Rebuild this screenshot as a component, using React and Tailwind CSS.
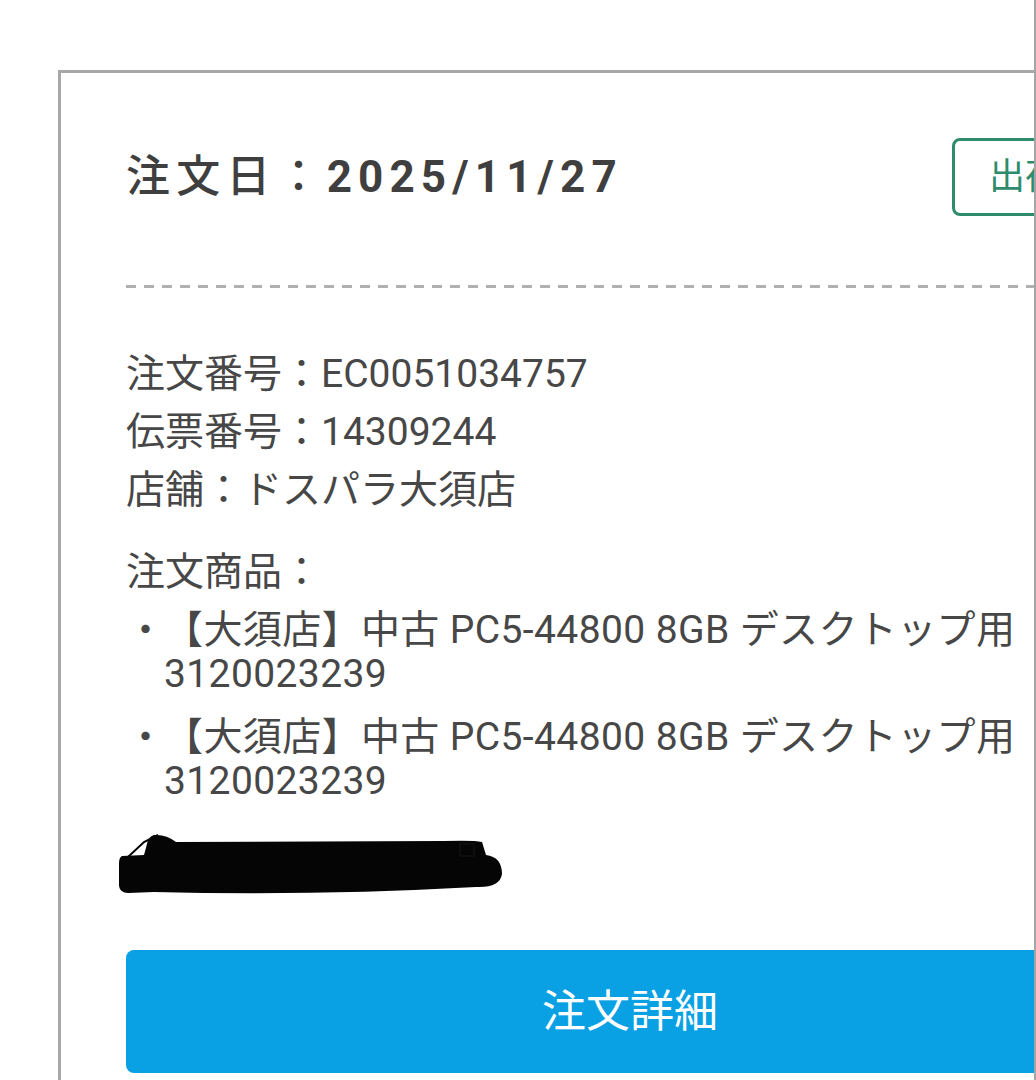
import React from 'react';

const items = [
    { name: '【大須店】中古 PC5-44800 8GB デスクトップ用', code: '3120023239' },
    { name: '【大須店】中古 PC5-44800 8GB デスクトップ用', code: '3120023239' },
];

// black marker scribble that hides the personal info line
const Redaction = () => (
    <svg width="400" height="70" viewBox="0 0 400 70" className="block -ml-[12px]">
        <path d="M8 26 Q5 27 5 34 L5 56 Q6 63 14 63 L40 62 Q200 66 362 57 Q386 58 388 44 Q388 27 372 25 L368 12 Q360 10 330 11 L62 12 Q52 4 40 5 Q34 7 33 14 L30 25 Z" fill="#050505" />
        <path d="M14 27 L30 12 L44 5" stroke="#050505" strokeWidth="2" fill="none" />
        <rect x="346" y="14" width="14" height="12" stroke="#111" strokeWidth="1.5" fill="none" />
    </svg>
);

const App = () => {
    return (
        <div className="w-[1036px] h-[1080px] overflow-hidden bg-white border-r-2 border-[#a5a5a5] box-border font-['Roboto','Noto_Sans_CJK_JP',sans-serif]">
            <div className="pt-[70px] pl-[58px]">
                <div className="w-[1144px] border-[3px] border-[#a8a8a8] px-[65px] pt-[65px] pb-[80px]">
                    {/* header */}
                    <div className="flex items-center justify-between h-[78px]">
                        <h2 className="text-[44px] tracking-[0.14em] text-[#3f3f3f] leading-none">
                            <span className="font-medium">注文日：</span>
                            <span className="font-bold">2025/11/27</span>
                        </h2>
                        <div className="w-[182px] h-[78px] border-[3px] border-[#2e8c6c] rounded-[8px] flex items-center justify-center text-[36px] text-[#2e8c6c]">
                            出荷済
                        </div>
                    </div>

                    <div className="mt-[69px] h-[3px] bg-[repeating-linear-gradient(to_right,#b0b0b0_0_10px,transparent_10px_18px)]"></div>

                    {/* order info */}
                    <div className="mt-[57px] text-[39px] leading-[58px] text-[#474747]">
                        <p>注文番号：EC0051034757</p>
                        <p>伝票番号：14309244</p>
                        <p>店舗：ドスパラ大須店</p>
                    </div>

                    <div className="mt-[24px] text-[39px] text-[#474747]">
                        <p className="leading-[58px]">注文商品：</p>
                        <ul className="mt-[7px] flex flex-col gap-[19px]">
                            {items.map((item, i) => (
                                <li key={i} className="flex leading-[44px]">
                                    <span className="w-[38px] shrink-0 text-center">・</span>
                                    <span className="tracking-[0.01em]">
                                        <span className="block">{item.name}</span>
                                        <span className="block">{item.code}</span>
                                    </span>
                                </li>
                            ))}
                        </ul>
                    </div>

                    <div className="mt-[27px]">
                        <Redaction />
                    </div>

                    <button className="mt-[50px] w-full h-[123px] rounded-[8px] bg-[#0aa0e4] text-white text-[44px] flex items-center justify-center">
                        注文詳細
                    </button>
                </div>
            </div>
        </div>
    );
};

export default App;
